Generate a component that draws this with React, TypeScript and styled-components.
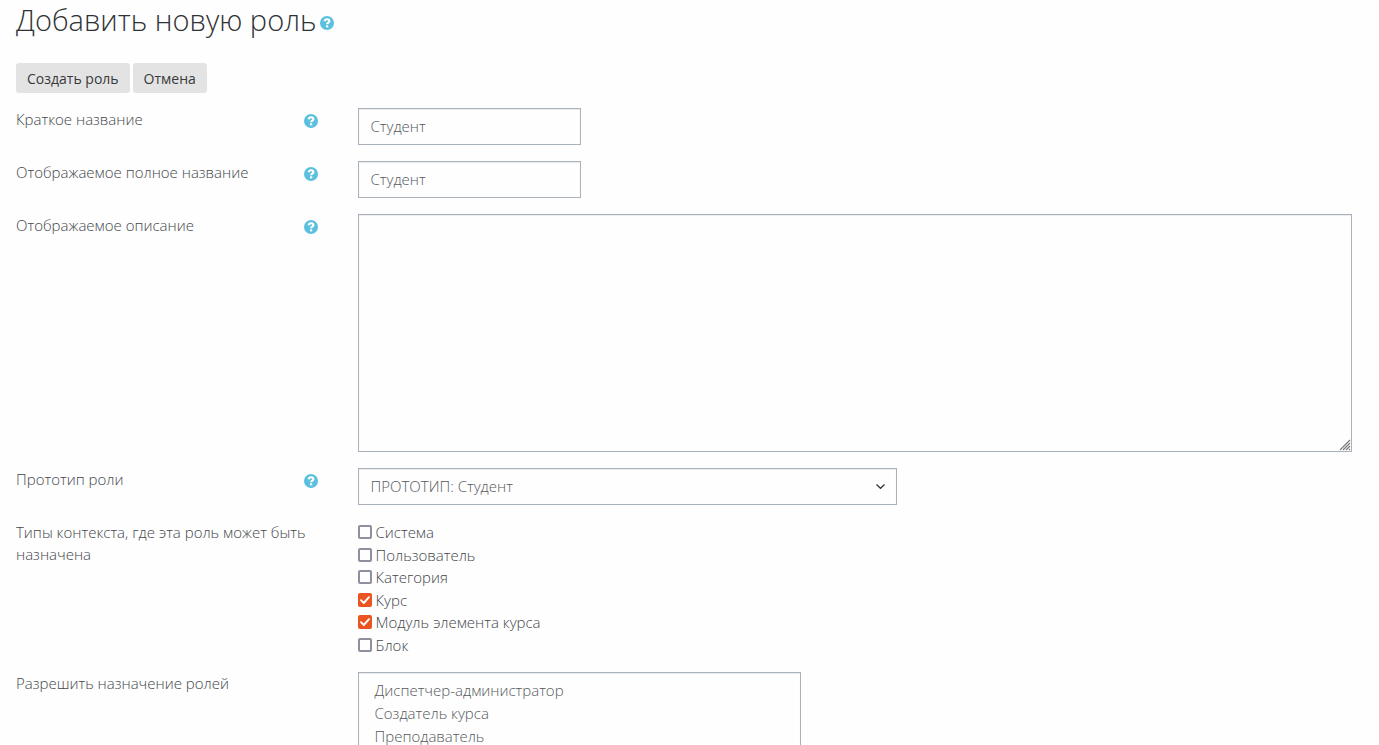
import React, { useState } from "react";
import styled, { createGlobalStyle } from "styled-components";

const GlobalStyle = createGlobalStyle`
  * { box-sizing: border-box; }
  body {
    margin: 0;
    background: #fefefe;
    color: #43474b;
    font-family: "Open Sans", "Noto Sans", sans-serif;
    font-size: 15px;
    font-weight: 300;
    line-height: 22px;
  }
`;

const Page = styled.main`
  padding: 0 27px 24px 16px;
`;

const Help = styled.button`
  display: block;
  flex: none;
  width: 14px;
  height: 14px;
  padding: 0;
  border: 0;
  background: none;
  cursor: pointer;
  svg { display: block; }
`;

const Heading = styled.h1`
  display: flex;
  align-items: center;
  gap: 4px;
  margin: 0;
  padding-top: 1px;
  font-size: 29px;
  font-weight: 300;
  line-height: 38px;
  color: #2f3234;
  ${Help} { margin-top: 5px; }
`;

const Actions = styled.div`
  display: flex;
  gap: 3px;
  margin: 24px 0 15px;
`;

const ActionButton = styled.button`
  height: 30px;
  padding: 1px 11px 0;
  border: 0;
  border-radius: 3px;
  background: #e3e3e3;
  color: #373a3c;
  font: inherit;
  font-weight: 400;
  font-size: 14px;
`;

const Row = styled.div`
  display: flex;
  margin: 0 -15px 16px;
`;

const LabelCell = styled.div`
  display: flex;
  flex: 0 0 25%;
  justify-content: space-between;
  align-items: flex-start;
  padding: 0 25px 0 15px;
  ${Help} { margin-top: 6px; }
`;

const WideLabelCell = styled(LabelCell)`
  padding-right: 15px;
`;

const FieldCell = styled.div`
  flex: 1;
  min-width: 0;
  padding: 0 15px;
`;

const fieldLook = `
  display: block;
  border: 1px solid #a9b2bc;
  border-radius: 0;
  background: #fefefe;
  box-shadow: inset 0 1px 1px rgba(0, 0, 0, 0.08);
  color: #55595c;
  font: inherit;
  outline: none;
`;

const TextInput = styled.input`
  ${fieldLook}
  width: 223px;
  height: 37px;
  padding: 0 12px 1px;
`;

const TextArea = styled.textarea`
  ${fieldLook}
  width: 100%;
  height: 238px;
  padding: 6px 12px;
  &::-webkit-resizer {
    background: url("data:image/svg+xml,%3Csvg xmlns='http://www.w3.org/2000/svg' width='12' height='12' viewBox='0 0 12 12'%3E%3Cpath d='M1 11 11 1M4 11 11 4M7 11 11 7M10 11 11 10' fill='none' stroke='%23777' stroke-width='1.1'/%3E%3C/svg%3E") right bottom / 12px 12px no-repeat;
  }
`;

const SelectBox = styled.div`
  position: relative;
  max-width: 539px;
  svg {
    position: absolute;
    top: 16px;
    right: 12px;
    pointer-events: none;
  }
`;

const Select = styled.select`
  ${fieldLook}
  appearance: none;
  width: 100%;
  height: 37px;
  padding: 0 32px 1px 12px;
`;

const CheckList = styled.div`
  display: grid;
  grid-auto-rows: 1fr;
  height: 135px;
`;

const CheckLabel = styled.label`
  display: flex;
  align-items: center;
  gap: 4px;
`;

const CheckBox = styled.input`
  appearance: none;
  width: 14px;
  height: 14px;
  margin: 0;
  border: 2px solid #8f8f9d;
  border-radius: 2px;
  background: #fefefe;
  &:checked {
    border-color: #e95420;
    background: #e95420 url("data:image/svg+xml,%3Csvg xmlns='http://www.w3.org/2000/svg' viewBox='0 0 10 10'%3E%3Cpath d='M1 5.2 3.8 8 9 2.2' fill='none' stroke='white' stroke-width='1.9' stroke-linecap='round' stroke-linejoin='round'/%3E%3C/svg%3E") center / 10px 10px no-repeat;
  }
`;

const RoleList = styled.select`
  ${fieldLook}
  width: 443px;
  max-width: 100%;
  height: 248px;
  padding: 7px 12px;
  option {
    min-height: 23px;
    padding: 0 4px;
    font-weight: 300;
    line-height: 23px;
  }
`;

function HelpButton({ topic }: { topic: string }) {
  return (
    <Help type="button" aria-label={topic}>
      <svg width="14" height="14" viewBox="0 0 14 14" aria-hidden="true">
        <circle cx="7" cy="7" r="7" fill="#5bc0de" />
        <path
          d="M4.6 5.3C4.900 3.900 5.700 3.300 7 3.300c1.400 0 2.400.7 2.400 1.900 0 1.500-2.300 1.500-2.300 3.100"
          fill="none"
          stroke="#fff"
          strokeWidth="2.100"
        />
        <rect x="6" y="9.300" width="2.200" height="2.100" fill="#fff" />
      </svg>
    </Help>
  );
}

const contexts = [
  { name: "Система", on: false },
  { name: "Пользователь", on: false },
  { name: "Категория", on: false },
  { name: "Курс", on: true },
  { name: "Модуль элемента курса", on: true },
  { name: "Блок", on: false },
];

const roles = ["Диспетчер-администратор", "Создатель курса", "Преподаватель"];

export default function App() {
  const [shortName, setShortName] = useState("Студент");
  const [fullName, setFullName] = useState("Студент");

  return (
    <>
      <GlobalStyle />
      <Page>
        <Heading>
          Добавить новую роль
          <HelpButton topic="Добавить новую роль" />
        </Heading>
        <form onSubmit={(e) => e.preventDefault()}>
          <Actions>
            <ActionButton type="submit">Создать роль</ActionButton>
            <ActionButton type="button">Отмена</ActionButton>
          </Actions>
          <Row>
            <LabelCell>
              <label htmlFor="shortname">Краткое название</label>
              <HelpButton topic="Краткое название" />
            </LabelCell>
            <FieldCell>
              <TextInput id="shortname" value={shortName} onChange={(e) => setShortName(e.target.value)} />
            </FieldCell>
          </Row>
          <Row>
            <LabelCell>
              <label htmlFor="name">Отображаемое полное название</label>
              <HelpButton topic="Отображаемое полное название" />
            </LabelCell>
            <FieldCell>
              <TextInput id="name" value={fullName} onChange={(e) => setFullName(e.target.value)} />
            </FieldCell>
          </Row>
          <Row>
            <LabelCell>
              <label htmlFor="description">Отображаемое описание</label>
              <HelpButton topic="Отображаемое описание" />
            </LabelCell>
            <FieldCell>
              <TextArea id="description" />
            </FieldCell>
          </Row>
          <Row>
            <LabelCell>
              <label htmlFor="archetype">Прототип роли</label>
              <HelpButton topic="Прототип роли" />
            </LabelCell>
            <FieldCell>
              <SelectBox>
                <Select id="archetype">
                  <option>ПРОТОТИП: Студент</option>
                </Select>
                <svg width="9" height="6" viewBox="0 0 9 6" aria-hidden="true">
                  <path d="M0.500 0.500 4.500 4.300 8.500 0.500" fill="none" stroke="#333" strokeWidth="1.200" />
                </svg>
              </SelectBox>
            </FieldCell>
          </Row>
          <Row role="group" aria-labelledby="contexts">
            <WideLabelCell>
              <span id="contexts">Типы контекста, где эта роль может быть назначена</span>
            </WideLabelCell>
            <FieldCell>
              <CheckList>
                {contexts.map((c) => (
                  <CheckLabel key={c.name}>
                    <CheckBox type="checkbox" defaultChecked={c.on} />
                    {c.name}
                  </CheckLabel>
                ))}
              </CheckList>
            </FieldCell>
          </Row>
          <Row>
            <LabelCell>
              <label htmlFor="allowassign">Разрешить назначение ролей</label>
            </LabelCell>
            <FieldCell>
              <RoleList id="allowassign" multiple size={10}>
                {roles.map((r) => (
                  <option key={r}>{r}</option>
                ))}
              </RoleList>
            </FieldCell>
          </Row>
        </form>
      </Page>
    </>
  );
}
